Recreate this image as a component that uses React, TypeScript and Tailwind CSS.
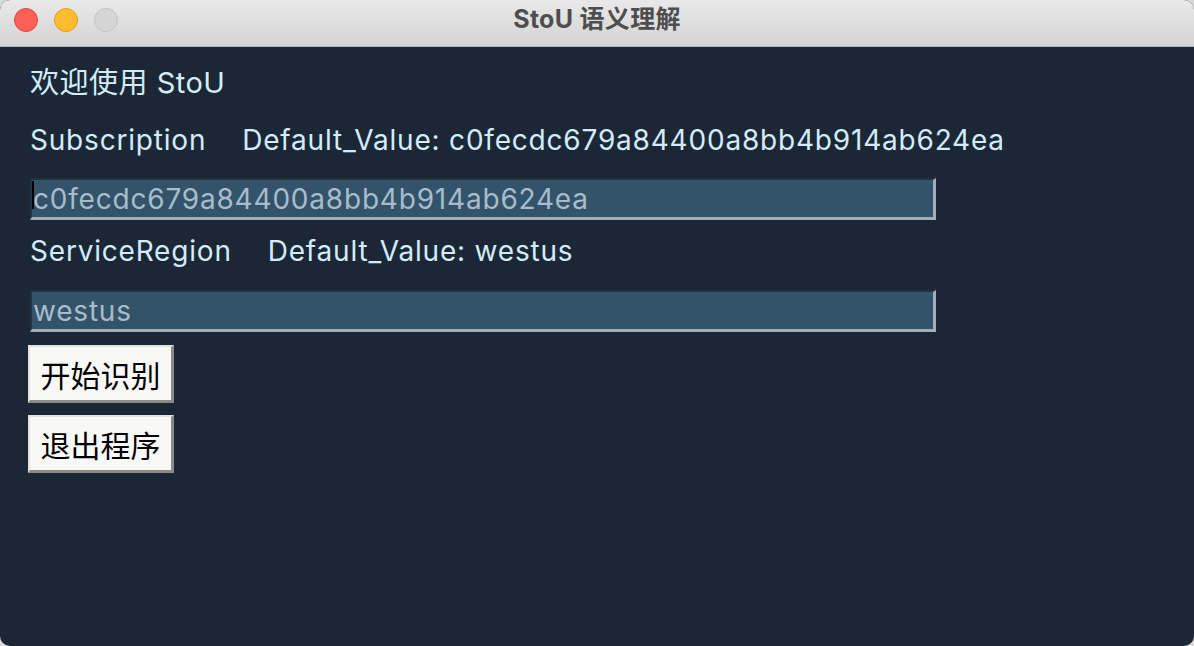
const latin = "font-['Inter','Noto_Sans_CJK_SC',sans-serif]";

function Field({ value, cursor }: { value: string; cursor?: boolean }) {
  return (
    <div className="relative ml-[30px] flex h-[42px] w-[906px] items-center border-t-2 border-l-2 border-r-[3px] border-b-[3px] border-t-[#213244] border-l-[#213244] border-r-[#a3adb8] border-b-[#a3adb8] bg-[#33536a] pl-[1px]">
      {cursor && <span className="absolute left-0 top-[1px] h-[28px] w-[2px] bg-black" />}
      <span className="text-[28px] leading-none tracking-[0.8px] text-[#a8bccb]">{value}</span>
    </div>
  );
}

function Btn({ label }: { label: string }) {
  return (
    <button className="ml-[28px] flex h-[58px] w-[146px] items-center justify-center border-t-2 border-l-2 border-r-[3px] border-b-[3px] border-t-[#e2e2df] border-l-[#e2e2df] border-r-[#8a8a88] border-b-[#8a8a88] bg-[#f8f8f6] font-['Noto_Sans_CJK_SC',sans-serif] text-[30px] leading-none text-black">
      {label}
    </button>
  );
}

export default function App() {
  return (
    <div className="h-[646px] w-[1194px] bg-[#d9d9d9]">
      <div className={`flex h-full w-full flex-col overflow-hidden rounded-[10px] bg-[#1b2735] ${latin}`}>
        <div className="relative flex h-[47px] shrink-0 items-center justify-center border-b border-[#b3b3b3] bg-gradient-to-b from-[#e9e9e9] to-[#d4d4d4]">
          <div className="absolute left-[14px] top-[8px] flex gap-[16px]">
            <span className="h-[24px] w-[24px] rounded-full border border-[#e0443e] bg-[#fe5f57]" />
            <span className="h-[24px] w-[24px] rounded-full border border-[#dea123] bg-[#febc2e]" />
            <span className="h-[24px] w-[24px] rounded-full border border-[#c2c2c2] bg-[#d6d6d6]" />
          </div>
          <span className="mb-[6px] text-[25px] font-bold tracking-[0.3px] text-[#4e4e4e]">StoU 语义理解</span>
        </div>

        <div className="flex flex-col text-[#d4ebfb]">
          <div className="ml-[30px] mt-[19px] h-[34px] text-[29px] leading-[34px] tracking-[0.5px]">欢迎使用 StoU</div>
          <div className="ml-[30px] mt-[23px] flex h-[34px] gap-[36px] text-[28px] leading-[34px] tracking-[0.8px]">
            <span>Subscription</span>
            <span>Default_Value: c0fecdc679a84400a8bb4b914ab624ea</span>
          </div>
          <div className="mt-[21px]">
            <Field value="c0fecdc679a84400a8bb4b914ab624ea" cursor />
          </div>
          <div className="ml-[30px] mt-[14px] flex h-[34px] gap-[36px] text-[28px] leading-[34px] tracking-[0.8px]">
            <span>ServiceRegion</span>
            <span>Default_Value: westus</span>
          </div>
          <div className="mt-[22px]">
            <Field value="westus" />
          </div>
          <div className="mt-[13px]">
            <Btn label="开始识别" />
          </div>
          <div className="mt-[12px]">
            <Btn label="退出程序" />
          </div>
        </div>
      </div>
    </div>
  );
}
